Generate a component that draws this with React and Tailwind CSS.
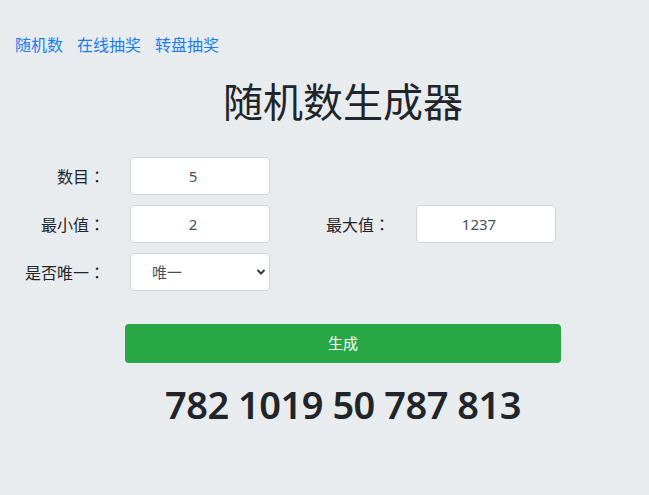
import React from "react";

function Colon() {
  return <span className="font-['Noto_Sans_CJK_TC',sans-serif]">：</span>;
}

export default function App() {
  return (
    <div className="min-h-[495px] bg-[#e9ecef] text-[#212529] font-['Noto_Sans','Noto_Sans_CJK_SC',sans-serif]">
      <nav className="pt-[33px] pl-[15px] flex gap-[14px] text-[16px] leading-[24px] text-[#1a7cf0]">
        <a href="#">随机数</a>
        <a href="#">在线抽奖</a>
        <a href="#">转盘抽奖</a>
      </nav>
      <h1 className="mt-[21px] pl-[37px] text-center text-[40px] leading-[48px] font-normal">随机数生成器</h1>
      <div className="mt-[31px] flex flex-col gap-[10px] text-[16px]">
        <div className="flex items-center">
          <label className="w-[105px] text-right">数目<Colon /></label>
          <input
            className="ml-[25px] w-[140px] h-[38px] bg-white border border-[#ced4da] rounded-[4px] text-center pl-3 pr-[26px] text-[15px] text-[#495057] outline-none"
            defaultValue="5"
          />
        </div>
        <div className="flex items-center">
          <label className="w-[105px] text-right">最小值<Colon /></label>
          <input
            className="ml-[25px] w-[140px] h-[38px] bg-white border border-[#ced4da] rounded-[4px] text-center pl-3 pr-[26px] text-[15px] text-[#495057] outline-none"
            defaultValue="2"
          />
          <label className="w-[120px] text-right">最大值<Colon /></label>
          <input
            className="ml-[26px] w-[140px] h-[38px] bg-white border border-[#ced4da] rounded-[4px] text-center pl-3 pr-[26px] text-[15px] text-[#495057] outline-none"
            defaultValue="1237"
          />
        </div>
        <div className="flex items-center">
          <label className="w-[105px] text-right">是否唯一<Colon /></label>
          <div className="ml-[25px] relative w-[140px] h-[38px]">
            <select className="appearance-none w-full h-full bg-white border border-[#ced4da] rounded-[4px] pl-[21px] text-[15px] text-[#495057] outline-none">
              <option>唯一</option>
              <option>不唯一</option>
            </select>
            <svg className="absolute right-[4px] top-[15px] pointer-events-none" width="10" height="8" viewBox="0 0 10 8">
              <path d="M1.5 2 L5 5.5 L8.5 2" fill="none" stroke="#343a40" strokeWidth="2" />
            </svg>
          </div>
        </div>
      </div>
      <div className="mt-[33px] flex justify-center pl-[37px]">
        <button className="w-[436px] h-[39px] rounded-[4px] bg-[#28a745] text-white text-[15px]">生成</button>
      </div>
      <div className="mt-[18px] pl-[37px] text-center text-[38px] leading-[46px] font-semibold tracking-[-0.5px]">
        782 1019 50 787 813
      </div>
    </div>
  );
}
